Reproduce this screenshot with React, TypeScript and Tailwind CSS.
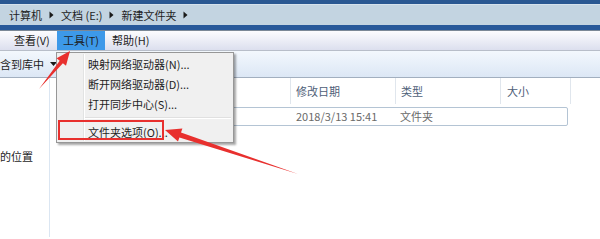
import React from 'react';

const Crumb: React.FC = () => (
  <svg width="5" height="8" viewBox="0 0 5 8" className="mx-[7px]">
    <path d="M0.5 0.5 L4.5 4 L0.5 7.5 Z" fill="#1a1a1a" />
  </svg>
);

const menuItems = ['映射网络驱动器(N)...', '断开网络驱动器(D)...', '打开同步中心(S)...'];

const App: React.FC = () => {
  return (
    <div
      className="relative w-[600px] h-[239px] overflow-hidden bg-white text-[11px] text-[#1e1e1e]"
      style={{ fontFamily: '"Noto Sans CJK SC", "Noto Sans", sans-serif' }}
    >
      {/* window frame */}
      <div className="h-[4px] bg-[#2a5892]" />
      <div className="h-[21px] bg-[#c3d4e1] flex items-center pl-[9px] border-t border-[#d6e2ec]">
        <span>计算机</span>
        <Crumb />
        <span>文档 (E:)</span>
        <Crumb />
        <span>新建文件夹</span>
        <Crumb />
      </div>
      <div className="h-[5px] bg-[#28599a]" />
      <div className="h-[1px] bg-[#7b8896]" />

      {/* menu bar */}
      <div className="h-[20px] flex items-stretch bg-gradient-to-b from-[#fcfcfe] to-[#dcdfee] border-b border-[#b8bec9]">
        <div className="pl-[14px] w-[57px] flex items-center">查看(V)</div>
        <div className="w-[48px] flex items-center justify-center bg-[#3d99e9]">工具(T)</div>
        <div className="pl-[7px] flex items-center">帮助(H)</div>
      </div>

      {/* toolbar */}
      <div className="h-[27px] flex items-center bg-gradient-to-b from-[#f3f8fd] to-[#dce7f5] border-b border-[#a2afbf]">
        <span>含到库中</span>
        <svg width="7" height="4" viewBox="0 0 7 4" className="ml-[6px]">
          <path d="M0 0 L7 0 L3.5 4 Z" fill="#1a1a1a" />
        </svg>
      </div>

      {/* body */}
      <div className="flex h-[159px]">
        <div className="w-[50px] border-r border-[#dbe6f2]">
          <div className="mt-[70px] whitespace-nowrap">的位置</div>
        </div>
        <div className="flex-1 flex flex-col">
          <div className="h-[26px] flex text-[#4e6078]">
            <div className="w-[240px]" />
            <div className="w-[105px] border-l border-[#e0e6ed] pl-[5px] flex items-center">修改日期</div>
            <div className="w-[105px] border-l border-[#e0e6ed] pl-[5px] flex items-center">类型</div>
            <div className="w-[71px] border-l border-r border-[#e0e6ed] pl-[6px] flex items-center">大小</div>
          </div>
          <div className="mt-[3px] ml-[10px] w-[508px] h-[19px] flex items-center border border-[#b4c4d4] rounded-[2px] text-[#6a6a6a]">
            <div className="w-[235px]" />
            <div className="w-[104px] whitespace-nowrap">2018/3/13 15:41</div>
            <div>文件夹</div>
          </div>
        </div>
      </div>

      {/* tools dropdown */}
      <div className="absolute left-[56px] top-[52px] w-[178px] h-[91px] bg-[#f0f0f0] border border-[#979797] shadow-[2px_2px_2px_rgba(0,0,0,0.35)]">
        <div className="absolute left-[26px] top-[1px] bottom-[1px] w-[1px] bg-[#e2e3e3]" />
        <div className="absolute left-[27px] top-[1px] bottom-[1px] w-[1px] bg-white" />
        <div className="relative pt-[1px]">
          {menuItems.map((item) => (
            <div key={item} className="h-[20px] flex items-center pl-[31px]">
              {item}
            </div>
          ))}
          <div className="h-[8px] flex items-center ml-[28px] mr-[2px]">
            <div className="flex-1 h-[2px] border-t border-[#e0e0e0] border-b border-b-white" />
          </div>
          <div className="h-[20px] flex items-center pl-[31px]">文件夹选项(O)...</div>
        </div>
      </div>

      {/* annotations */}
      <div className="absolute left-[58px] top-[120px] w-[106px] h-[20px] border-2 border-[#e8302e]" />
      <svg className="absolute inset-0 pointer-events-none" width="600" height="239" viewBox="0 0 600 239">
        <polygon
          points="39,89 59.7,60.8 56.6,58.3 70,51 66,65.7 62.9,63.2"
          fill="#e8302e"
        />
        <polygon
          points="298,174 181,132.6 182.4,128.4 165,130 178,141.6 179.4,137.4"
          fill="#e8302e"
        />
      </svg>
    </div>
  );
};

export default App;
